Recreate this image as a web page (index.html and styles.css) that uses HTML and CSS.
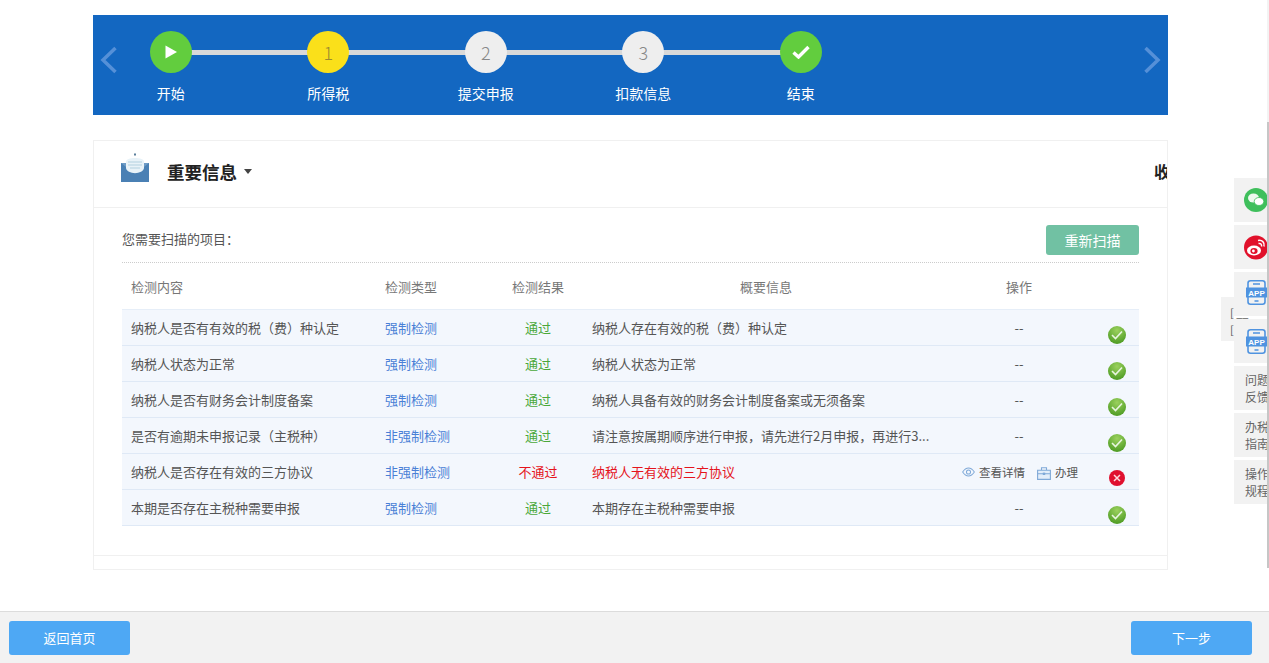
FILE: index.html
```html
<!DOCTYPE html>
<html lang="zh-CN">
<head>
    <meta charset="UTF-8">
    <title>申报</title>
    <link rel="stylesheet" href="styles.css">
</head>
<body>

<div class="page">
    <div class="banner">
        <svg class="arrow arrow-left" width="18" height="28" viewBox="0 0 18 28"><path d="M15.5 2 L3 14 L15.5 26" fill="none" stroke="#5590d8" stroke-width="3.5"/></svg>
        <div class="steps">
            <div class="step">
                <div class="circle green"><svg width="14" height="14" viewBox="0 0 14 14"><path d="M1.5 0.5 L13 7 L1.5 13.5 Z" fill="#fff"/></svg></div>
                <div class="step-name">开始</div>
            </div>
            <div class="step">
                <div class="circle yellow">1</div>
                <div class="step-name">所得税</div>
            </div>
            <div class="step">
                <div class="circle">2</div>
                <div class="step-name">提交申报</div>
            </div>
            <div class="step">
                <div class="circle">3</div>
                <div class="step-name">扣款信息</div>
            </div>
            <div class="step">
                <div class="circle green"><svg width="18" height="14" viewBox="0 0 18 14"><path d="M1.5 7.5 L6.5 12 L16.5 2" fill="none" stroke="#fff" stroke-width="3.4"/></svg></div>
                <div class="step-name">结束</div>
            </div>
        </div>
        <svg class="arrow arrow-right" width="18" height="28" viewBox="0 0 18 28"><path d="M2.5 2 L15 14 L2.5 26" fill="none" stroke="#5590d8" stroke-width="3.5"/></svg>
    </div>

    <div class="panel">
        <div class="panel-head">
            <div class="panel-title">
                <svg class="mail-icon" width="28" height="29" viewBox="0 0 28 29">
                    <path d="M0 10 H28 V29 H0 Z" fill="#4a80b4"/>
                    <path d="M0 10 L14 21 L28 10 Z" fill="#6f9cc6"/>
                    <path d="M5 9 C5 6 9 5 14 5 C19 5 23 6 23 9 V15 C23 18 18 20 14 20 C10 20 5 18 5 15 Z" fill="#e8f2f8"/>
                    <path d="M7 9 H21 M7 12 H21 M9 15 H19" stroke="#b2d0df" stroke-width="1"/>
                    <path d="M13 0.5 H15 V2.5 H13 Z" fill="#5a7f9c"/>
                </svg>
                <span class="title-text">重要信息</span>
                <span class="caret"></span>
            </div>
            <span class="collapse">收</span>
        </div>
        <div class="panel-body">
            <div class="toolbar">
                <span>您需要扫描的项目：</span>
                <a class="btn-scan">重新扫描</a>
            </div>
            <table class="check-table">
                <thead>
                    <tr>
                        <th class="col-name">检测内容</th>
                        <th class="col-type">检测类型</th>
                        <th class="col-result">检测结果</th>
                        <th class="col-info head-info">概要信息</th>
                        <th class="col-op">操作</th>
                        <th class="col-status"></th>
                    </tr>
                </thead>
                <tbody>
                    <tr>
                        <td>纳税人是否有有效的税（费）种认定</td>
                        <td class="link">强制检测</td>
                        <td class="pass">通过</td>
                        <td class="info">纳税人存在有效的税（费）种认定</td>
                        <td class="op">--</td>
                        <td class="status"><span class="ok-dot"><svg width="12" height="10" viewBox="0 0 12 10"><path d="M1 5 L4.5 8.5 L11 1.5" fill="none" stroke="#e8f5df" stroke-width="1.6"/></svg></span></td>
                    </tr>
                    <tr>
                        <td>纳税人状态为正常</td>
                        <td class="link">强制检测</td>
                        <td class="pass">通过</td>
                        <td class="info">纳税人状态为正常</td>
                        <td class="op">--</td>
                        <td class="status"><span class="ok-dot"><svg width="12" height="10" viewBox="0 0 12 10"><path d="M1 5 L4.5 8.5 L11 1.5" fill="none" stroke="#e8f5df" stroke-width="1.6"/></svg></span></td>
                    </tr>
                    <tr>
                        <td>纳税人是否有财务会计制度备案</td>
                        <td class="link">强制检测</td>
                        <td class="pass">通过</td>
                        <td class="info">纳税人具备有效的财务会计制度备案或无须备案</td>
                        <td class="op">--</td>
                        <td class="status"><span class="ok-dot"><svg width="12" height="10" viewBox="0 0 12 10"><path d="M1 5 L4.5 8.5 L11 1.5" fill="none" stroke="#e8f5df" stroke-width="1.6"/></svg></span></td>
                    </tr>
                    <tr>
                        <td>是否有逾期未申报记录（主税种）</td>
                        <td class="link">非强制检测</td>
                        <td class="pass">通过</td>
                        <td class="info">请注意按属期顺序进行申报，请先进行2月申报，再进行3...</td>
                        <td class="op">--</td>
                        <td class="status"><span class="ok-dot"><svg width="12" height="10" viewBox="0 0 12 10"><path d="M1 5 L4.5 8.5 L11 1.5" fill="none" stroke="#e8f5df" stroke-width="1.6"/></svg></span></td>
                    </tr>
                    <tr>
                        <td>纳税人是否存在有效的三方协议</td>
                        <td class="link">非强制检测</td>
                        <td class="fail">不通过</td>
                        <td class="info fail-info">纳税人无有效的三方协议</td>
                        <td class="op">
                            <div class="op-links">
                                <span class="op-link">
                                    <svg width="13" height="10" viewBox="0 0 14 10"><path d="M0.7 5 C3 1.5 5 0.7 7 0.7 C9 0.7 11 1.5 13.3 5 C11 8.5 9 9.3 7 9.3 C5 9.3 3 8.5 0.7 5 Z" fill="none" stroke="#7fa9d8" stroke-width="1.1"/><circle cx="7" cy="5" r="2.2" fill="none" stroke="#7fa9d8" stroke-width="1.1"/></svg>
                                    查看详情
                                </span>
                                <span class="op-link">
                                    <svg class="case-icon" width="14" height="13" viewBox="0 0 14 13"><path d="M0.6 3.2 H13.4 V12.4 H0.6 Z" fill="#e3eefa" stroke="#7fa9d8" stroke-width="1.1"/><path d="M4.5 3 V0.7 H9.5 V3 M0.6 6.8 H13.4" fill="none" stroke="#7fa9d8" stroke-width="1.1"/><path d="M5.8 5.6 H8.2 V8 H5.8 Z" fill="#7fa9d8"/></svg>
                                    办理
                                </span>
                            </div>
                        </td>
                        <td class="status"><span class="no-dot"><svg width="8" height="8" viewBox="0 0 8 8"><path d="M1 1 L7 7 M7 1 L1 7" stroke="#ffd9dd" stroke-width="1.5"/></svg></span></td>
                    </tr>
                    <tr>
                        <td>本期是否存在主税种需要申报</td>
                        <td class="link">强制检测</td>
                        <td class="pass">通过</td>
                        <td class="info">本期存在主税种需要申报</td>
                        <td class="op">--</td>
                        <td class="status"><span class="ok-dot"><svg width="12" height="10" viewBox="0 0 12 10"><path d="M1 5 L4.5 8.5 L11 1.5" fill="none" stroke="#e8f5df" stroke-width="1.6"/></svg></span></td>
                    </tr>
                </tbody>
            </table>
        </div>
    </div>
</div>

<div class="footer">
    <a class="btn-foot">返回首页</a>
    <a class="btn-foot">下一步</a>
</div>

<!-- 右侧浮动栏 -->
<div class="side-tip"><span>[ __</span><span>[</span></div>
<div class="side-bar">
    <div class="side-item">
        <svg width="24" height="24" viewBox="0 0 24 24"><circle cx="12" cy="12" r="12" fill="#3fbf5c"/><ellipse cx="9.5" cy="10" rx="5.5" ry="4.5" fill="#eef9ef"/><ellipse cx="15" cy="13.5" rx="4.8" ry="4" fill="#fff" stroke="#3fbf5c" stroke-width="0.8"/></svg>
    </div>
    <div class="side-item">
        <svg width="24" height="25" viewBox="0 0 24 25"><circle cx="12" cy="12.5" r="12" fill="#e1112b"/><ellipse cx="10" cy="15.5" rx="7" ry="5" fill="#fff"/><ellipse cx="10" cy="16" rx="3.6" ry="3" fill="#e1112b"/><circle cx="9.4" cy="16" r="1.4" fill="#fff"/><path d="M14 5.5 C18 4.5 21 7.5 20 11.5 M14.5 8.5 C16.5 8 18 9.5 17.5 11.5" fill="none" stroke="#fff" stroke-width="1.5"/></svg>
    </div>
    <div class="side-item side-app side-app-first">
        <svg width="21" height="25" viewBox="0 0 21 25"><rect x="2" y="0.8" width="17" height="23.4" rx="2.5" fill="none" stroke="#4f93e0" stroke-width="1.6"/><rect x="0" y="7.5" width="21" height="10" fill="#4f93e0"/><path d="M7 4 H14 M8.5 21 H12.5" stroke="#4f93e0" stroke-width="1.6"/><text x="10.5" y="15.8" class="app-label">APP</text></svg>
    </div>
    <div class="side-item side-app">
        <svg width="21" height="25" viewBox="0 0 21 25"><rect x="2" y="0.8" width="17" height="23.4" rx="2.5" fill="none" stroke="#4f93e0" stroke-width="1.6"/><rect x="0" y="7.5" width="21" height="10" fill="#4f93e0"/><path d="M7 4 H14 M8.5 21 H12.5" stroke="#4f93e0" stroke-width="1.6"/><text x="10.5" y="15.8" class="app-label">APP</text></svg>
    </div>
    <div class="side-item side-text">问题<br>反馈</div>
    <div class="side-item side-text">办税<br>指南</div>
    <div class="side-item side-text">操作<br>规程</div>
</div>
<div class="scroll-line"></div>

</body>
</html>
```

FILE: styles.css
```css
* {
    box-sizing: border-box;
}

body {
    margin: 0;
    height: 100vh;
    overflow: hidden;
    display: flex;
    flex-direction: column;
    background-color: #fff;
    color: #555;
    font-family: "Noto Sans CJK SC", "Liberation Sans", sans-serif;
    font-size: 13px;
}

.page {
    flex: 1;
    width: 1075px;
    margin-left: 93px;
    padding-top: 15px;
}

/* 顶部步骤条 */
.banner {
    position: relative;
    height: 100px;
    background-color: #1367c1;
}

.arrow {
    position: absolute;
    top: 31px;
}

.arrow-left {
    left: 7px;
}

.arrow-right {
    right: 7px;
}

.steps {
    display: flex;
    position: relative;
    width: 787.5px;
    margin-left: -1px;
    padding-top: 16px;
}

.steps::before {
    content: "";
    position: absolute;
    top: 35px;
    left: 78px;
    width: 630px;
    height: 5px;
    background-color: #d9d9d9;
}

.step {
    width: 157.5px;
    display: flex;
    flex-direction: column;
    align-items: center;
    position: relative;
}

.circle {
    width: 42px;
    height: 42px;
    border-radius: 50%;
    display: flex;
    justify-content: center;
    align-items: center;
    background-color: #eeeeee;
    color: #888;
    font-size: 18px;
    font-weight: 300;
}

.circle.green {
    background-color: #62cd3e;
}

.circle.yellow {
    background-color: #fae01a;
    color: #9a8a30;
}

.step-name {
    margin-top: 10px;
    color: #fff;
    font-size: 14px;
    line-height: 20px;
}

/* 重要信息 */
.panel {
    margin-top: 25px;
    height: 430px;
    border: 1px solid #f0f0f0;
}

.panel-head {
    height: 67px;
    padding: 0 0 6px 27px;
    display: flex;
    justify-content: space-between;
    align-items: center;
    border-bottom: 1px solid #f0f0f0;
    overflow: hidden;
}

.panel-title {
    display: flex;
    align-items: center;
}

.mail-icon {
    margin: 0 18px 7px 0;
}

.title-text {
    color: #222;
    font-size: 17.5px;
    font-weight: 700;
}

.caret {
    width: 0;
    height: 0;
    margin-left: 7px;
    border-left: 4.5px solid transparent;
    border-right: 4.5px solid transparent;
    border-top: 5px solid #444;
}

.collapse {
    color: #222;
    font-size: 16px;
    font-weight: 700;
    margin-right: -3px;
}

.panel-body {
    height: 348px;
    padding: 0 28px;
    border-bottom: 1px solid #f0f0f0;
}

.toolbar {
    height: 55px;
    display: flex;
    justify-content: space-between;
    align-items: center;
    padding-top: 6px;
    border-bottom: 1px dotted #ccc;
}

.btn-scan {
    width: 93px;
    height: 30px;
    margin-top: 3px;
    line-height: 30px;
    text-align: center;
    border-radius: 3px;
    background-color: #71c1a3;
    color: #fff;
    font-size: 14px;
}

.check-table {
    width: 1017px;
    border-collapse: collapse;
    table-layout: fixed;
}

.check-table th {
    height: 46px;
    padding: 1px 0 0;
    color: #777;
    font-weight: 400;
    text-align: left;
}

.check-table td {
    height: 36px;
    padding: 0;
    background-color: #f3f7fd;
    border-top: 1px solid #e6eef8;
    border-bottom: 1px solid #dfe9f6;
}

.col-name {
    width: 254px;
}

.check-table .col-name,
.check-table td:first-child {
    padding-left: 9px;
}

.col-type {
    width: 128px;
}

.check-table .col-type,
.check-table td.link {
    padding-left: 9px;
}

.col-result {
    width: 68px;
}

.check-table .col-result {
    text-align: center;
}

.col-info {
    width: 388px;
}

.check-table .head-info {
    text-align: center;
}

.col-op {
    width: 118px;
}

.check-table .col-op {
    text-align: center;
}

.col-status {
    width: 61px;
}

.link {
    color: #4a7fd6;
}

.pass {
    color: #4aa83a;
    text-align: center;
}

.fail {
    color: #e5141c;
    text-align: center;
}

.check-table td.info {
    padding-left: 20px;
}

.fail-info {
    color: #e5141c;
}

.op {
    text-align: center;
}

.op-links {
    display: flex;
    justify-content: flex-end;
    gap: 12px;
    padding-top: 1px;
    font-size: 11.5px;
    white-space: nowrap;
}

.op-link {
    display: flex;
    align-items: center;
    gap: 4px;
}

.case-icon {
    margin-top: 3px;
}

.check-table td.status {
    vertical-align: bottom;
    padding: 0 0 1px 30px;
}

.ok-dot,
.no-dot {
    display: flex;
    justify-content: center;
    align-items: center;
    border-radius: 50%;
}

.ok-dot {
    width: 18px;
    height: 18px;
    background: radial-gradient(circle at 50% 25%, #9bd15e, #4c9a22 85%);
}

.no-dot {
    width: 16px;
    height: 16px;
    margin: 0 0 2px 1px;
    background-color: #e0102f;
}

/* 底部按钮 */
.footer {
    height: 52px;
    padding: 0 17px 0 9px;
    display: flex;
    justify-content: space-between;
    align-items: center;
    background-color: #f2f2f2;
    border-top: 1px solid #dcdcdc;
}

.btn-foot {
    width: 121px;
    height: 34px;
    line-height: 34px;
    text-align: center;
    border-radius: 3px;
    background-color: #4ea8f4;
    color: #fff;
}

/* 右侧浮动栏 */
.side-bar {
    position: absolute;
    top: 178px;
    left: 1234px;
    width: 35px;
    display: flex;
    flex-direction: column;
    gap: 3px;
}

.side-item {
    height: 44px;
    padding-left: 10px;
    display: flex;
    align-items: center;
    background-color: #f2f2f2;
    overflow: hidden;
    flex-shrink: 0;
}

.side-item svg {
    flex-shrink: 0;
}

.side-app {
    padding-left: 12px;
}

.side-app-first {
    padding-bottom: 3px;
}

.side-text {
    display: block;
    padding-top: 5px;
    padding-left: 11px;
    color: #666;
    font-size: 12px;
    line-height: 17px;
    white-space: nowrap;
}

.app-label {
    fill: #fff;
    font-family: "Liberation Sans", sans-serif;
    font-size: 8px;
    font-weight: 700;
    text-anchor: middle;
}

.side-tip {
    position: absolute;
    top: 297px;
    left: 1221px;
    width: 13px;
    height: 44px;
    padding: 8px 0 0 9px;
    display: flex;
    flex-direction: column;
    gap: 2px;
    background-color: #f2f2f2;
    color: #555;
    font-size: 11px;
    line-height: 15px;
    white-space: nowrap;
}

.scroll-line {
    position: absolute;
    top: 0;
    right: 0;
    width: 2px;
    height: 568px;
    background: linear-gradient(#f3f3f3 122px, #c6c6c6 122px);
}
```
